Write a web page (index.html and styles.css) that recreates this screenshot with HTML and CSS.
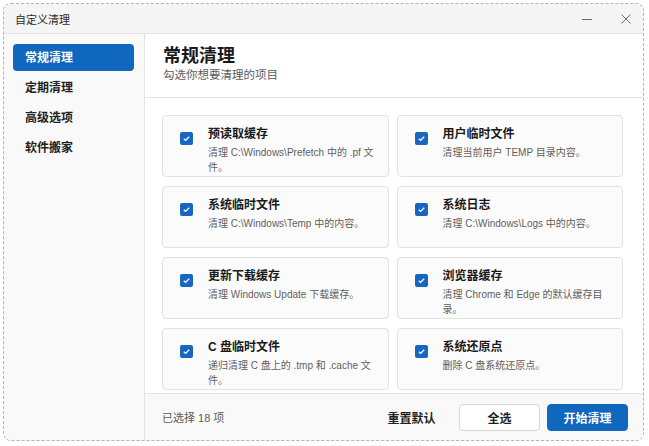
FILE: index.html
```html
<!DOCTYPE html>
<html lang="zh-CN">
<head>
    <meta charset="UTF-8">
    <meta name="viewport" content="width=device-width, initial-scale=1.0">
    <title>自定义清理</title>
    <link rel="stylesheet" href="styles.css">
</head>
<body>
    <div class="window">
        <div class="titlebar">
            <span class="titlebar-text">自定义清理</span>
            <div class="titlebar-controls">
                <button class="ctl" aria-label="最小化">
                    <svg width="12" height="12" viewBox="0 0 12 12"><path d="M1 6.5h10" stroke="#6b6b6b" stroke-width="1"/></svg>
                </button>
                <button class="ctl" aria-label="关闭">
                    <svg width="12" height="12" viewBox="0 0 12 12"><path d="M1.5 1.5l9 9M10.5 1.5l-9 9" stroke="#6b6b6b" stroke-width="1"/></svg>
                </button>
            </div>
        </div>

        <div class="body">
            <nav class="sidebar">
                <a class="nav-item active">常规清理</a>
                <a class="nav-item">定期清理</a>
                <a class="nav-item">高级选项</a>
                <a class="nav-item">软件搬家</a>
            </nav>

            <main class="main">
                <div class="header">
                    <h1 class="header-title">常规清理</h1>
                    <p class="header-sub">勾选你想要清理的项目</p>
                </div>

                <div class="content">
                    <div class="grid">
                        <label class="card">
                            <span class="check"><svg width="9" height="9" viewBox="0 0 9 9"><path d="M1.8 4.7l1.8 1.7 3.6-3.7" fill="none" stroke="#fff" stroke-width="1.3"/></svg></span>
                            <span class="card-text">
                                <span class="card-title">预读取缓存</span>
                                <span class="card-desc">清理 C:\Windows\Prefetch 中的 .pf 文件。</span>
                            </span>
                        </label>
                        <label class="card">
                            <span class="check"><svg width="9" height="9" viewBox="0 0 9 9"><path d="M1.8 4.7l1.8 1.7 3.6-3.7" fill="none" stroke="#fff" stroke-width="1.3"/></svg></span>
                            <span class="card-text">
                                <span class="card-title">用户临时文件</span>
                                <span class="card-desc">清理当前用户 TEMP 目录内容。</span>
                            </span>
                        </label>
                        <label class="card">
                            <span class="check"><svg width="9" height="9" viewBox="0 0 9 9"><path d="M1.8 4.7l1.8 1.7 3.6-3.7" fill="none" stroke="#fff" stroke-width="1.3"/></svg></span>
                            <span class="card-text">
                                <span class="card-title">系统临时文件</span>
                                <span class="card-desc">清理 C:\Windows\Temp 中的内容。</span>
                            </span>
                        </label>
                        <label class="card">
                            <span class="check"><svg width="9" height="9" viewBox="0 0 9 9"><path d="M1.8 4.7l1.8 1.7 3.6-3.7" fill="none" stroke="#fff" stroke-width="1.3"/></svg></span>
                            <span class="card-text">
                                <span class="card-title">系统日志</span>
                                <span class="card-desc">清理 C:\Windows\Logs 中的内容。</span>
                            </span>
                        </label>
                        <label class="card">
                            <span class="check"><svg width="9" height="9" viewBox="0 0 9 9"><path d="M1.8 4.7l1.8 1.7 3.6-3.7" fill="none" stroke="#fff" stroke-width="1.3"/></svg></span>
                            <span class="card-text">
                                <span class="card-title">更新下载缓存</span>
                                <span class="card-desc">清理 Windows Update 下载缓存。</span>
                            </span>
                        </label>
                        <label class="card">
                            <span class="check"><svg width="9" height="9" viewBox="0 0 9 9"><path d="M1.8 4.7l1.8 1.7 3.6-3.7" fill="none" stroke="#fff" stroke-width="1.3"/></svg></span>
                            <span class="card-text">
                                <span class="card-title">浏览器缓存</span>
                                <span class="card-desc">清理 Chrome 和 Edge 的默认缓存目录。</span>
                            </span>
                        </label>
                        <label class="card">
                            <span class="check"><svg width="9" height="9" viewBox="0 0 9 9"><path d="M1.8 4.7l1.8 1.7 3.6-3.7" fill="none" stroke="#fff" stroke-width="1.3"/></svg></span>
                            <span class="card-text">
                                <span class="card-title">C 盘临时文件</span>
                                <span class="card-desc">递归清理 C 盘上的 .tmp 和 .cache 文件。</span>
                            </span>
                        </label>
                        <label class="card">
                            <span class="check"><svg width="9" height="9" viewBox="0 0 9 9"><path d="M1.8 4.7l1.8 1.7 3.6-3.7" fill="none" stroke="#fff" stroke-width="1.3"/></svg></span>
                            <span class="card-text">
                                <span class="card-title">系统还原点</span>
                                <span class="card-desc">删除 C 盘系统还原点。</span>
                            </span>
                        </label>
                    </div>
                </div>

                <div class="footer">
                    <span class="footer-count">已选择 18 项</span>
                    <div class="footer-actions">
                        <button class="btn btn-text">重置默认</button>
                        <button class="btn btn-outline">全选</button>
                        <button class="btn btn-primary">开始清理</button>
                    </div>
                </div>
            </main>
        </div>
    </div>
</body>
</html>
```

FILE: styles.css
```css
* {
  box-sizing: border-box;
}

body {
  margin: 0;
  padding: 3px;
  background-color: #ffffff;
  font-family: "Segoe UI", "Liberation Sans", "Noto Sans CJK SC", sans-serif;
  color: #1b1b1b;
}

.window {
  width: 641px;
  height: 438px;
  border: 1px dashed #b4b4b4;
  border-radius: 8px;
  overflow: hidden;
  display: flex;
  flex-direction: column;
  background-color: #f9f9f9;
}

/* Title bar */
.titlebar {
  height: 30px;
  flex: none;
  display: flex;
  align-items: center;
  justify-content: space-between;
  padding: 0 4px 0 11px;
  background-color: #f5f5f5;
  border-bottom: 1px solid #e3e3e3;
}

.titlebar-text {
  font-size: 11px;
  color: #2a2a2a;
}

.titlebar-controls {
  display: flex;
  gap: 13px;
}

.ctl {
  width: 26px;
  height: 22px;
  border: none;
  background: transparent;
  padding: 0;
  display: flex;
  align-items: center;
  justify-content: center;
}

/* Body */
.body {
  flex: 1;
  display: flex;
  min-height: 0;
}

.sidebar {
  width: 141px;
  flex: none;
  padding: 10px 10px 0 9px;
  background-color: #f9f9f9;
  border-right: 1px solid #e3e3e3;
  display: flex;
  flex-direction: column;
  gap: 3px;
}

.nav-item {
  height: 27px;
  line-height: 28px;
  padding-left: 12px;
  border-radius: 4px;
  font-size: 12px;
  font-weight: 700;
  color: #1f1f1f;
}

.nav-item.active {
  background-color: #0f67be;
  color: #ffffff;
}

/* Main */
.main {
  flex: 1;
  display: flex;
  flex-direction: column;
  min-width: 0;
  background-color: #ffffff;
}

.header {
  flex: none;
  padding: 11px 18px 14px;
  border-bottom: 1px solid #e3e3e3;
}

.header-title {
  margin: 0;
  font-size: 18px;
  line-height: 22px;
  font-weight: 700;
  color: #1a1a1a;
}

.header-sub {
  margin: 0;
  font-size: 11.5px;
  line-height: 16px;
  color: #5c5c5c;
}

.content {
  flex: 1;
  min-height: 0;
  overflow: hidden;
  padding: 17px 20px 0 17px;
}

.grid {
  display: grid;
  grid-template-columns: 1fr 1fr;
  grid-auto-rows: 62px;
  column-gap: 8px;
  row-gap: 9px;
}

.card {
  display: flex;
  align-items: flex-start;
  gap: 15px;
  padding: 10px 12px 0 17px;
  background-color: #fbfbfb;
  border: 1px solid #e2e2e2;
  border-radius: 4px;
}

.check {
  flex: none;
  width: 13px;
  height: 13px;
  margin-top: 6px;
  border-radius: 2px;
  background-color: #1767c0;
  display: flex;
  align-items: center;
  justify-content: center;
}

.card-text {
  display: flex;
  flex-direction: column;
  gap: 3px;
  min-width: 0;
}

.card-title {
  font-size: 12px;
  line-height: 16px;
  font-weight: 700;
  color: #1a1a1a;
}

.card-desc {
  font-size: 10px;
  line-height: 15px;
  color: #5f5f5f;
}

/* Footer */
.footer {
  flex: none;
  height: 47px;
  display: flex;
  align-items: center;
  justify-content: space-between;
  padding: 0 15px 0 17px;
  background-color: #f9f9f9;
  border-top: 1px solid #e3e3e3;
}

.footer-count {
  font-size: 11px;
  color: #5a5a5a;
}

.footer-actions {
  display: flex;
  gap: 7px;
}

.btn {
  width: 81px;
  height: 27px;
  border-radius: 4px;
  font-family: inherit;
  font-size: 12px;
  font-weight: 700;
  padding: 0;
  cursor: pointer;
}

.btn-text {
  border: none;
  background: transparent;
  color: #1f1f1f;
}

.btn-outline {
  border: 1px solid #d6d6d6;
  background-color: #ffffff;
  color: #1f1f1f;
}

.btn-primary {
  border: 1px solid #0f67be;
  background-color: #0f67be;
  color: #ffffff;
}
```
